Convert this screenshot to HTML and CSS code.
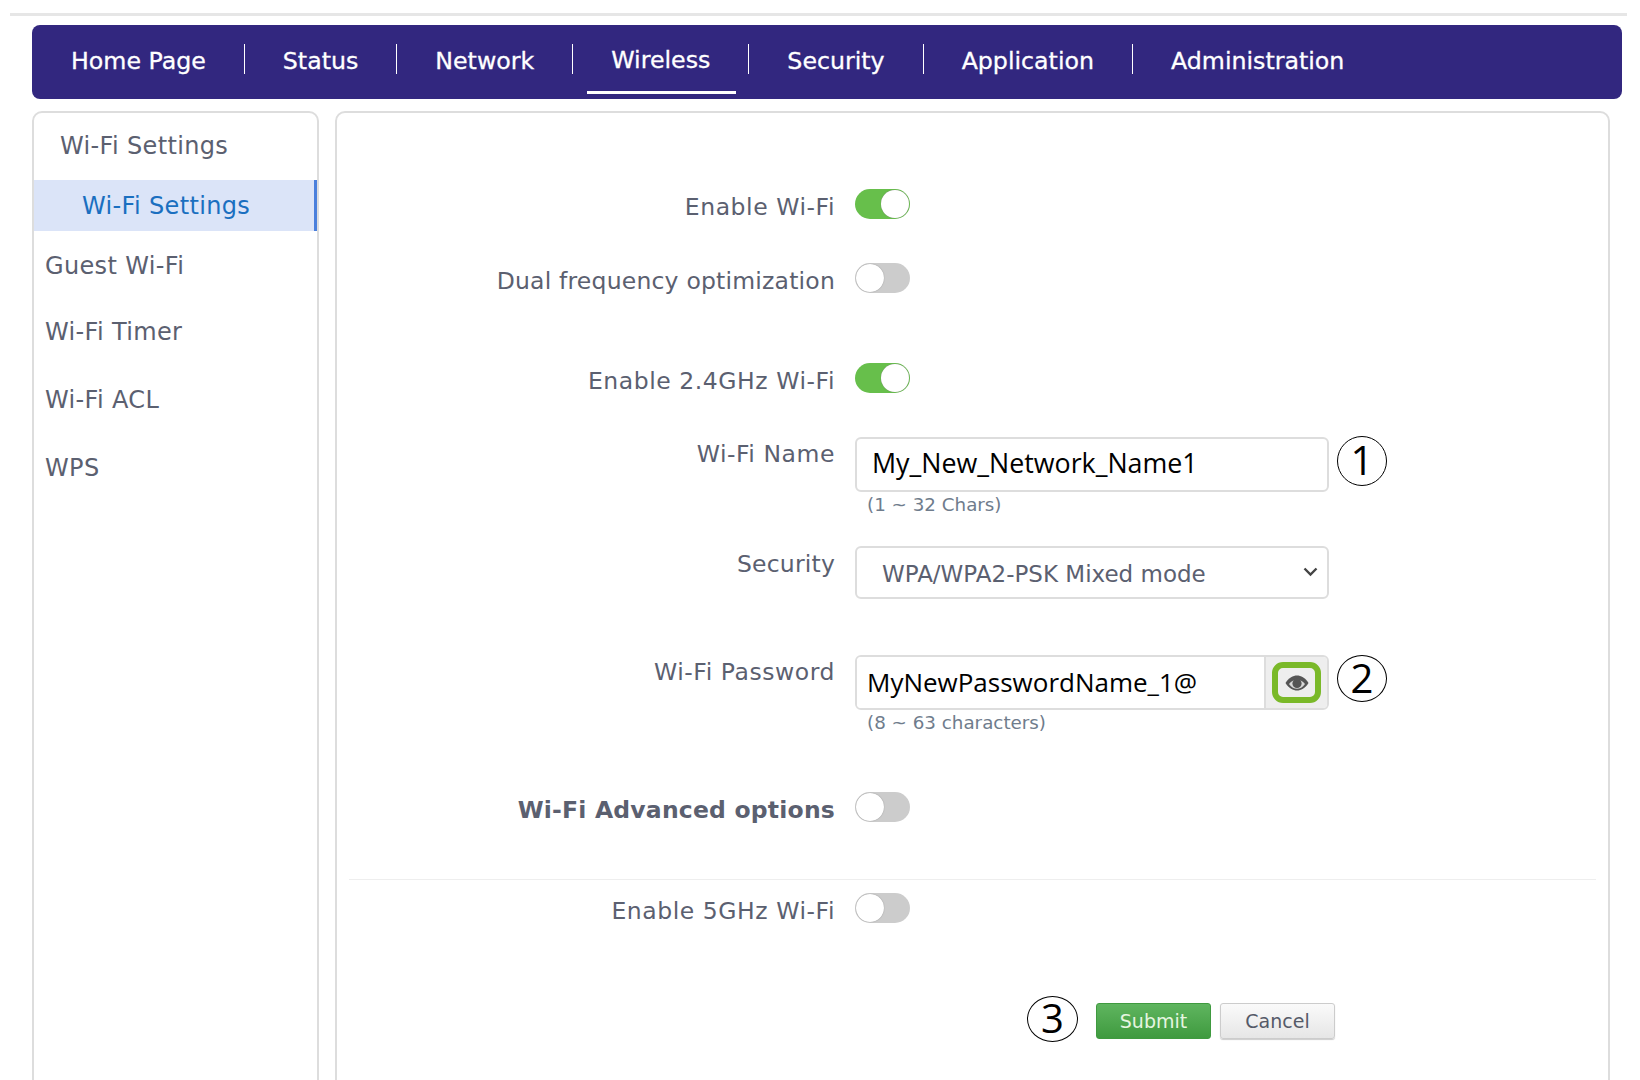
FILE: index.html
```html
<!DOCTYPE html>
<html lang="en">
<head>
<meta charset="UTF-8">
<meta name="viewport" content="width=device-width, initial-scale=1.0">
<title>Wi-Fi Settings</title>
<link rel="stylesheet" href="styles.css">
</head>
<body>

<div class="top-line"></div>

<!-- Main menu -->
<div class="nav">
  <a class="nav-item">Home Page</a>
  <a class="nav-item">Status</a>
  <a class="nav-item">Network</a>
  <a class="nav-item active">Wireless</a>
  <a class="nav-item">Security</a>
  <a class="nav-item">Application</a>
  <a class="nav-item last">Administration</a>
</div>

<div class="content">
  <div class="sidebar">
    <div class="side-title">Wi-Fi Settings</div>
    <div class="side-active">Wi-Fi Settings</div>
    <div class="side-item guest">Guest Wi-Fi</div>
    <div class="side-item timer">Wi-Fi Timer</div>
    <div class="side-item acl">Wi-Fi ACL</div>
    <div class="side-item wps">WPS</div>
  </div>

  <div class="main">
    <div class="row row-first">
      <div class="label label-wide">Enable Wi-Fi</div>
      <div class="toggle on"><span class="knob"></span></div>
    </div>
    <div class="row row-dual">
      <div class="label">Dual frequency optimization</div>
      <div class="toggle"><span class="knob"></span></div>
    </div>
    <div class="row row-band">
      <div class="label label-wide">Enable 2.4GHz Wi-Fi</div>
      <div class="toggle on"><span class="knob"></span></div>
    </div>

    <div class="row row-name">
      <div class="label label-field label-wide">Wi-Fi Name</div>
      <div class="field-wrap">
        <input class="field name-field" type="text" value="My_New_Network_Name1">
        <div class="hint">(1 ~ 32 Chars)</div>
      </div>
      <div class="step step-one">1</div>
    </div>

    <div class="row row-security">
      <div class="label label-field label-security">Security</div>
      <div class="select-wrap">
        <select class="select">
          <option>WPA/WPA2-PSK Mixed mode</option>
        </select>
        <svg class="chevron" width="15" height="10" viewBox="0 0 15 10"><path d="M1.500 1.500 7.500 7.500l6-6" fill="none" stroke="#444" stroke-width="2.400"/></svg>
      </div>
    </div>

    <div class="row row-password">
      <div class="label label-field label-wide">Wi-Fi Password</div>
      <div class="field-wrap">
        <div class="input-group">
          <input class="field password-field" type="text" value="MyNewPasswordName_1@">
          <div class="addon">
            <div class="eye-ring">
              <svg width="26" height="18" viewBox="0 0 26 18">
                <path d="M1.500 9C5 3.500 9 1.500 13 1.500S21 3.500 24.500 9C21 14.500 17 16.500 13 16.500S5 14.500 1.500 9Z" fill="#555"/>
                <path d="M5 10C7.500 7 10 5.800 13 5.800S18.500 7 21 10C18.500 13.500 16 14.800 13 14.800S7.500 13.500 5 10Z" fill="#d8d8d8"/>
                <circle cx="13" cy="9.500" r="4.600" fill="#555"/>
              </svg>
            </div>
          </div>
        </div>
        <div class="hint">(8 ~ 63 characters)</div>
      </div>
      <div class="step step-two">2</div>
    </div>

    <div class="row row-advanced">
      <div class="label label-bold">Wi-Fi Advanced options</div>
      <div class="toggle"><span class="knob"></span></div>
    </div>

    <hr class="divider">

    <div class="row row-five">
      <div class="label label-wide">Enable 5GHz Wi-Fi</div>
      <div class="toggle"><span class="knob"></span></div>
    </div>

    <div class="actions">
      <div class="step step-three">3</div>
      <button class="btn btn-submit">Submit</button>
      <button class="btn btn-cancel">Cancel</button>
    </div>
  </div>
</div>

</body>
</html>
```

FILE: styles.css
```css
body {
  font-family: 'DejaVu Sans', sans-serif;
  background-color: #fff;
  margin: 0;
  height: 1080px;
  overflow: hidden;
}
.top-line {
  height: 3px;
  background-color: #e6e6e6;
  margin: 13px 13px 9px 10px;
}

/* Main menu */
.nav {
  display: flex;
  height: 74px;
  margin: 0 18px 0 32px;
  padding-left: 39px;
  background-color: #32277f;
  border-radius: 8px;
  color: #fff;
  font-size: 23.700px;
}
.nav-item {
  position: relative;
  display: flex;
  align-items: center;
  height: 72px;
  -webkit-text-stroke: 0.3px #fff;
  padding-right: 39px;
  margin-right: 38px;
}
.nav-item::after {
  content: "";
  position: absolute;
  right: 0;
  top: 19px;
  height: 30px;
  width: 1px;
  background-color: #fff;
}
.nav-item.last::after {
  display: none;
}
.nav-item.active {
  height: 70px;
}
.nav-item.active::before {
  content: "";
  position: absolute;
  left: -24px;
  right: 13px;
  top: 66px;
  height: 2.500px;
  background-color: #fff;
}

.content {
  display: flex;
  gap: 16px;
  height: 1000px;
  margin: 12px 30px 0 32px;
}

/* Left menu */
.sidebar {
  flex: 0 0 287px;
  box-sizing: border-box;
  border: 2px solid #ddd;
  border-radius: 10px 10px 0 0;
  color: #5b6070;
  font-size: 24px;
  letter-spacing: 0.35px;
}
.side-title {
  height: 67px;
  line-height: 66px;
  padding-left: 26px;
}
.side-active {
  height: 51px;
  line-height: 52px;
  padding-left: 48px;
  background-color: #dbe4f8;
  border-right: 3px solid #4a7fdc;
  color: #1a6fc0;
}
.side-item {
  height: 34px;
  line-height: 34px;
  padding-left: 11px;
}
.guest { margin-top: 18px; }
.timer { margin-top: 32px; }
.acl { margin-top: 34px; }
.wps { margin-top: 34px; }

/* Form */
.main {
  flex: 1;
  box-sizing: border-box;
  border: 2px solid #ddd;
  border-radius: 10px 10px 0 0;
  padding: 76px 13px 0 11px;
  color: #5b6070;
  font-size: 23.500px;
  letter-spacing: 0.2px;
}
.row {
  display: flex;
  gap: 20px;
}
.row-dual { margin-top: 44px; }
.row-band { margin-top: 70px; }
.row-name { margin-top: 44px; height: 79px; }
.row-security { margin-top: 30px; }
.row-password { margin-top: 56px; height: 79px; }
.row-advanced { margin-top: 58px; }
.row-five { margin-top: 0; }
.label {
  flex: 0 0 487px;
  text-align: right;
  height: 30px;
  line-height: 36px;
}
.label-wide {
  letter-spacing: 0.55px;
}
.label-field {
  line-height: 34px;
}
.label-security {
  line-height: 36px;
}
.label-bold {
  font-weight: bold;
}
.toggle {
  display: flex;
  justify-content: flex-start;
  box-sizing: border-box;
  width: 55px;
  height: 30px;
  padding: 1px;
  background-color: #ccc;
  border-radius: 15px;
}
.toggle.on {
  justify-content: flex-end;
  background-color: #67bf4b;
}
.knob {
  width: 28px;
  height: 28px;
  background-color: #fff;
  border-radius: 50%;
  box-shadow: 0 0 1px #777;
}

.field-wrap {
  width: 474px;
}
.field {
  box-sizing: border-box;
  display: block;
  font-family: 'Open Sans', sans-serif;
  font-size: 26px;
  letter-spacing: 0;
  color: #000;
  outline: none;
}
.name-field {
  width: 474px;
  height: 55px;
  padding: 0 0 4px 15px;
  border: 2px solid #ddd;
  border-radius: 6px;
  font-size: 26.800px;
}
.hint {
  padding-left: 12px;
  padding-top: 1px;
  line-height: 24px;
  font-size: 18.300px;
  letter-spacing: 0;
  color: #6f7c8c;
}
.select-wrap {
  position: relative;
  width: 474px;
}
.select {
  appearance: none;
  box-sizing: border-box;
  width: 100%;
  height: 53px;
  padding: 2px 0 0 25px;
  border: 2px solid #ddd;
  border-radius: 6px;
  background-color: #fff;
  color: #5b6070;
  font-family: 'DejaVu Sans', sans-serif;
  font-size: 23px;
}
.chevron {
  position: absolute;
  right: 11px;
  top: 21px;
}
.input-group {
  display: flex;
  height: 55px;
  box-sizing: border-box;
  border: 2px solid #ddd;
  border-radius: 6px;
  overflow: hidden;
}
.password-field {
  flex: 1;
  min-width: 0;
  border: none;
  padding: 0 0 2px 10px;
}
.addon {
  display: flex;
  align-items: center;
  justify-content: center;
  width: 61px;
  background-color: #eee;
  border-left: 2px solid #ddd;
}
.eye-ring {
  display: flex;
  align-items: center;
  justify-content: center;
  box-sizing: border-box;
  width: 49px;
  height: 41px;
  border: 6px solid #7ab929;
  border-radius: 11px;
}

/* Numbered callouts */
.step {
  flex: none;
  box-sizing: border-box;
  width: 50px;
  height: 50px;
  border: 1.500px solid #000;
  border-radius: 50%;
  color: #000;
  font-family: 'Open Sans', sans-serif;
  font-size: 40px;
  letter-spacing: 0;
  line-height: 46px;
  text-align: center;
}
.step-one {
  margin: -1px 0 0 -12px;
}
.step-two {
  margin: 0 0 0 -12px;
  height: 47px;
  line-height: 43px;
}

.divider {
  border: none;
  border-top: 1px solid #eee;
  margin: 57px -1px 13px 1px;
}

.actions {
  display: flex;
  align-items: center;
  margin-top: 73px;
  padding-left: 679px;
}
.step-three {
  margin: 0 18px 4px 0;
  width: 51px;
  height: 46px;
  line-height: 42px;
}
.btn {
  box-sizing: border-box;
  width: 115px;
  height: 36px;
  border-radius: 3px;
  font-family: 'DejaVu Sans', sans-serif;
  font-size: 19px;
}
.btn-submit {
  margin-right: 9px;
  border: 1px solid #3f9a3f;
  background: linear-gradient(#5fb55f, #3f9a3f);
  color: #e6f5e0;
}
.btn-cancel {
  border: 1px solid #ccc;
  background: linear-gradient(#fafafa, #e6e6e6);
  color: #555a68;
  box-shadow: 0 1px 1px #ccc;
}
```
